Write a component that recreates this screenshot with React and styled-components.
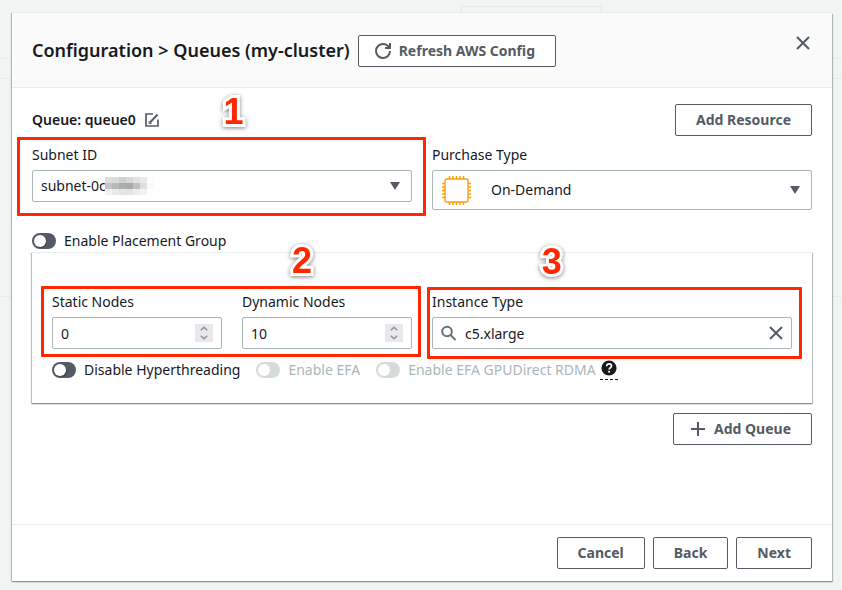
import React, { useState } from 'react';
import styled, { createGlobalStyle } from 'styled-components';

const ink = '#16191f';
const slate = '#545b64';
const line = '#eaeded';
const field = '#aab7b8';
const alert = '#ff2600';

const GlobalStyle = createGlobalStyle`
  *, *::before, *::after { box-sizing: border-box; }
  body {
    margin: 0;
    background: #f2f4f4;
    color: ${ink};
    font-family: "Noto Sans", "Open Sans", sans-serif;
    font-size: 14px;
    line-height: 20px;
  }
  button, input, select { font: inherit; color: inherit; margin: 0; }
`;

const Screen = styled.div`
  display: grid;
  grid-template-columns: minmax(0, 1fr);
  min-height: 100vh;
  & > * { grid-area: 1 / 1; }
`;

const Backdrop = styled.div`
  display: grid;
  grid-template-rows: 59px 20px 218px 1fr;
`;

const BackdropBand = styled.div`
  display: flex;
  justify-content: center;
  align-items: flex-end;
  border-bottom: 1px solid ${({ $plain }) => ($plain ? 'transparent' : '#e8eaeb')};
`;

const BackdropTab = styled.div`
  width: 141px;
  height: 52px;
  margin-left: 221px;
  border: 1px solid #e4e7e7;
  border-radius: 2px;
`;

const Modal = styled.div`
  position: relative;
  display: flex;
  flex-direction: column;
  margin: 13px 10px 9px 12px;
  background: #fff;
  box-shadow: 0 1px 1px #879596, 1px 1px 1px #b4bfc0, -1px 0 1px #b4bfc0;
`;

const Header = styled.header`
  display: flex;
  align-items: flex-start;
  gap: 8px;
  padding: 22px 20px 20px;
  background: #fafafa;
  border-bottom: 1px solid ${line};
`;

const Title = styled.h1`
  margin: 0;
  font-size: 18px;
  line-height: 30px;
  font-weight: 600;
`;

const Button = styled.button`
  display: inline-flex;
  align-items: center;
  gap: 8px;
  height: 32px;
  padding: 0 20px 0 ${({ $icon }) => ($icon ? '16px' : '20px')};
  border: 1px solid ${slate};
  border-radius: 2px;
  background: #fff;
  color: ${slate};
  font-weight: 700;
  white-space: nowrap;
  cursor: pointer;
`;

const IconButton = styled.button`
  display: inline-flex;
  padding: 0;
  border: 0;
  background: none;
  color: ${slate};
  cursor: pointer;
`;

const CloseButton = styled(IconButton)`
  margin-left: auto;
  padding: 0 1px;
`;

const Body = styled.main`
  flex: 1;
  padding: 16px 20px 20px;
`;

const Row = styled.div`
  display: flex;
  align-items: center;
  justify-content: ${({ $end }) => ($end ? 'flex-end' : 'space-between')};
  gap: 8px;
`;

const QueueName = styled.h2`
  display: flex;
  align-items: center;
  gap: 8px;
  margin: 0;
  font-size: 14px;
  line-height: 20px;
  font-weight: 600;
`;

const Columns = styled.div`
  display: grid;
  grid-template-columns: repeat(2, minmax(0, 1fr));
  align-items: start;
  gap: 20px;
`;

const QueueFields = styled(Columns)`
  margin: 9px 0 21px;
`;

const Marked = styled.div`
  position: relative;
`;

const Field = styled.div`
  display: flex;
  flex-direction: column;
  gap: 5px;
`;

const Control = styled.div`
  position: relative;
  display: flex;
  align-items: center;
  height: ${({ $tall }) => ($tall ? '40px' : '32px')};
  border: 1px solid ${field};
  border-radius: 2px;
  background: #fff;
`;

const Select = styled.select`
  width: 100%;
  height: 100%;
  padding: 0 32px 0 ${({ $inset }) => ($inset ? '58px' : '8px')};
  border: 0;
  background: none;
  appearance: none;
`;

const Input = styled.input`
  flex: 1;
  min-width: 0;
  height: 30px;
  padding: 0 8px;
  border: 0;
  outline: 0;
  background: none;
  appearance: textfield;
  &::-webkit-inner-spin-button, &::-webkit-search-cancel-button { display: none; }
`;

const InstanceInput = styled(Input)`
  padding-left: 32px;
`;

const ClearButton = styled(IconButton)`
  margin-right: 7px;
`;

const Overlay = styled.span`
  position: absolute;
  display: flex;
  color: #687078;
  pointer-events: none;
  ${({ $side }) => ($side === 'right' ? 'right: 11px;' : 'left: 8px;')}
`;

const Mosaic = styled.svg`
  position: absolute;
  left: 72px;
  top: 6px;
`;

const Stepper = styled.div`
  display: flex;
  flex-direction: column;
  width: 18px;
  height: 18px;
  margin-right: 8px;
  background: #e9e9ed;
`;

const Step = styled.button`
  display: flex;
  align-items: center;
  justify-content: center;
  height: 9px;
  padding: 0;
  border: 0;
  background: none;
  color: #8f8f9d;
`;

const ToggleLabel = styled.label`
  display: flex;
  align-items: center;
  gap: 8px;
  color: ${({ $disabled }) => ($disabled ? field : ink)};
  white-space: nowrap;
`;

const Switch = styled.input`
  appearance: none;
  flex: none;
  width: 24px;
  height: 16px;
  margin: 0;
  padding: 2px;
  border-radius: 8px;
  background: ${slate};
  &::before {
    content: '';
    display: block;
    width: 12px;
    height: 12px;
    border-radius: 6px;
    background: #fff;
    box-shadow: 1px 1px 1px rgba(0, 0, 0, 0.25);
  }
  &:checked { background: #0073bb; }
  &:checked::before { margin-left: 8px; }
  &:disabled { background: #d5dbdb; }
  &:disabled::before { box-shadow: none; }
`;

const Panel = styled.section`
  margin: 1px 0 10px;
  padding: 39px 20px 23px;
  background: #fff;
  border-top: 1px solid ${line};
  box-shadow: 0 1px 1px #879596, 1px 1px 1px #c3cccd, -1px 1px 1px #c3cccd;
`;

const ToggleRow = styled.div`
  display: flex;
  align-items: center;
  gap: 16px;
  margin-top: 11px;
`;

const WithHelp = styled.div`
  display: flex;
  align-items: center;
  gap: 4px;
`;

const HelpButton = styled(IconButton)`
  padding: 0 1px 3px;
  border-bottom: 1px dashed ${ink};
  color: ${ink};
`;

const Footer = styled.footer`
  display: flex;
  justify-content: flex-end;
  gap: 8px;
  padding: 12px 20px;
  border-top: 1px solid ${line};
`;

const Frame = styled.div`
  position: absolute;
  inset: ${({ $inset }) => $inset};
  border: 3px solid ${alert};
  border-radius: 1px;
  pointer-events: none;
`;

const Marker = styled.span`
  position: absolute;
  bottom: 100%;
  left: ${({ $left }) => $left};
  margin-bottom: 10px;
  transform: translateX(-50%);
  color: ${alert};
  font-family: "Liberation Sans", Arial, sans-serif;
  font-size: 36px;
  line-height: 36px;
  font-weight: 700;
  -webkit-text-stroke: 6px #fff;
  paint-order: stroke fill;
  filter: drop-shadow(0 1px 2px rgba(0, 0, 0, 0.5));
`;

function Callout({ number, left, inset }) {
  return (
    <Frame $inset={inset}>
      <Marker $left={left}>{number}</Marker>
    </Frame>
  );
}

const Glyph = ({ size = 16, children, width = 2 }) => (
  <svg width={size} height={size} viewBox="0 0 16 16" fill="none" stroke="currentColor" strokeWidth={width} aria-hidden="true">
    {children}
  </svg>
);

const RefreshIcon = () => (
  <Glyph>
    <path d="M10 5h5V0" />
    <path d="M15 8a6.96 6.96 0 0 1-7 7 6.96 6.96 0 0 1-7-7 6.96 6.96 0 0 1 7-7 7 7 0 0 1 6.3 4" />
  </Glyph>
);
const CloseIcon = () => <Glyph><path d="m2 2 12 12M14 2 2 14" /></Glyph>;
const PlusIcon = () => <Glyph><path d="M8 1v14M1 8h14" /></Glyph>;
const EditIcon = () => (
  <Glyph width={1.7}>
    <path d="M9 2H2v12h12V7.500" />
    <path d="M6 10.500 13.500 2.500" strokeWidth="2" />
    <path d="M5 9v2.500h2.500" strokeWidth="1" />
  </Glyph>
);
const SearchIcon = () => (
  <Glyph>
    <circle cx="6" cy="6.5" r="4.8" />
    <path d="m9.500 10 5 5" />
  </Glyph>
);
const Caret = () => (
  <svg width="10" height="8" viewBox="0 0 10 8" aria-hidden="true"><path d="M0 0h10L5 8z" fill={slate} /></svg>
);
const Chevron = ({ down }) => (
  <svg width="8" height="5" viewBox="0 0 8 5" fill="none" stroke="currentColor" strokeWidth="1.5" aria-hidden="true">
    <path d={down ? 'm.8.8 3.2 3 3.2-3' : 'M.8 4.2 4 1.2l3.2 3'} />
  </svg>
);
const HelpIcon = () => (
  <svg width="16" height="16" viewBox="0 0 16 16" aria-hidden="true">
    <circle cx="8" cy="8" r="7.6" fill="currentColor" />
    <path d="M5.7 6.2C5.7 4.6 6.7 3.8 8.1 3.8s2.4.8 2.4 2.1c0 1.7-2.3 1.8-2.3 3.7" fill="none" stroke="#fff" strokeWidth="1.7" />
    <path d="M7.2 10.8h1.9v1.8H7.2z" fill="#fff" />
  </svg>
);

const pins = [8.5, 12, 15.5, 19, 22.5];
const ChipIcon = () => (
  <svg width="31" height="31" viewBox="0 0 31 31" fill="none" stroke="#ff9d0a" strokeWidth="1.4" aria-hidden="true">
    <rect x="4" y="4" width="23" height="23" rx="1.5" />
    {pins.map((p) => (
      <path key={p} d={`M${p} 1v3M${p} 27v3M1 ${p}h3M27 ${p}h3`} />
    ))}
  </svg>
);

const mosaicRows = [
  ['#dcdedf', '#d9dadb', '#cfd0d1', '#d9dadb', '#e2e3e4', '#e9e9ea', '#fdfdfd'],
  ['#c3c4c6', '#b8b9bb', '#acadaf', '#a8a9ab', '#c0c1c3', '#dfe0e1', '#fafafa'],
  ['#f1f3f3', '#e8ebea', '#e3e6e5', '#e4e6e6', '#eceded', '#f2f2f2', '#ffffff'],
];

function RedactedDigits() {
  return (
    <Mosaic width="49" height="18" viewBox="0 0 49 18" shapeRendering="crispEdges" aria-hidden="true">
      {mosaicRows.map((row, y) =>
        row.map((fill, x) => <rect key={`${x}-${y}`} x={x * 7} y={y * 6} width="7" height="6" fill={fill} />)
      )}
    </Mosaic>
  );
}

function NumberField({ id, label, initial }) {
  const [value, setValue] = useState(initial);
  return (
    <Field>
      <label htmlFor={id}>{label}</label>
      <Control>
        <Input id={id} type="number" min="0" value={value} onChange={(e) => setValue(Number(e.target.value))} />
        <Stepper>
          <Step type="button" aria-label={`Increase ${label}`} onClick={() => setValue(value + 1)}><Chevron /></Step>
          <Step type="button" aria-label={`Decrease ${label}`} onClick={() => setValue(Math.max(0, value - 1))}><Chevron down /></Step>
        </Stepper>
      </Control>
    </Field>
  );
}

function Toggle({ label, disabled }) {
  return (
    <ToggleLabel $disabled={disabled}>
      <Switch type="checkbox" role="switch" disabled={disabled} />
      {label}
    </ToggleLabel>
  );
}

export default function App() {
  const [instance, setInstance] = useState('c5.xlarge');
  return (
    <Screen>
      <GlobalStyle />
      <Backdrop aria-hidden="true">
        <BackdropBand><BackdropTab /></BackdropBand>
        <BackdropBand />
        <BackdropBand />
        <BackdropBand $plain />
      </Backdrop>
      <Modal role="dialog" aria-labelledby="dialog-title">
        <Header>
          <Title id="dialog-title">Configuration &gt; Queues (my-cluster)</Title>
          <Button type="button" $icon><RefreshIcon />Refresh AWS Config</Button>
          <CloseButton type="button" aria-label="Close"><CloseIcon /></CloseButton>
        </Header>
        <Body>
          <Row>
            <QueueName>
              Queue: queue0
              <IconButton type="button" aria-label="Rename queue"><EditIcon /></IconButton>
            </QueueName>
            <Button type="button">Add Resource</Button>
          </Row>
          <QueueFields>
            <Marked>
              <Field>
                <label htmlFor="subnet">Subnet ID</label>
                <Control>
                  <Select id="subnet"><option>subnet-0c</option></Select>
                  <RedactedDigits />
                  <Overlay $side="right"><Caret /></Overlay>
                </Control>
              </Field>
              <Callout number="1" left="53%" inset="-8px -14px -14px -15px" />
            </Marked>
            <Field>
              <label htmlFor="purchase">Purchase Type</label>
              <Control $tall>
                <Overlay><ChipIcon /></Overlay>
                <Select id="purchase" $inset><option>On-Demand</option></Select>
                <Overlay $side="right"><Caret /></Overlay>
              </Control>
            </Field>
          </QueueFields>
          <Toggle label="Enable Placement Group" />
          <Panel>
            <Columns>
              <Marked>
                <Columns>
                  <NumberField id="static" label="Static Nodes" initial={0} />
                  <NumberField id="dynamic" label="Dynamic Nodes" initial={10} />
                </Columns>
                <Callout number="2" left="69%" inset="-6px -9px -8px -11px" />
              </Marked>
              <Marked>
                <Field>
                  <label htmlFor="instance">Instance Type</label>
                  <Control>
                    <Overlay><SearchIcon /></Overlay>
                    <InstanceInput id="instance" type="text" value={instance} onChange={(e) => setInstance(e.target.value)} />
                    <ClearButton type="button" aria-label="Clear instance type" onClick={() => setInstance('')}><CloseIcon /></ClearButton>
                  </Control>
                </Field>
                <Callout number="3" left="33%" inset="-5px -10px -10px -5px" />
              </Marked>
            </Columns>
            <ToggleRow>
              <Toggle label="Disable Hyperthreading" />
              <Toggle label="Enable EFA" disabled />
              <WithHelp>
                <Toggle label="Enable EFA GPUDirect RDMA" disabled />
                <HelpButton type="button" aria-label="Help"><HelpIcon /></HelpButton>
              </WithHelp>
            </ToggleRow>
          </Panel>
          <Row $end>
            <Button type="button" $icon><PlusIcon />Add Queue</Button>
          </Row>
        </Body>
        <Footer>
          <Button type="button">Cancel</Button>
          <Button type="button">Back</Button>
          <Button type="button">Next</Button>
        </Footer>
      </Modal>
    </Screen>
  );
}
